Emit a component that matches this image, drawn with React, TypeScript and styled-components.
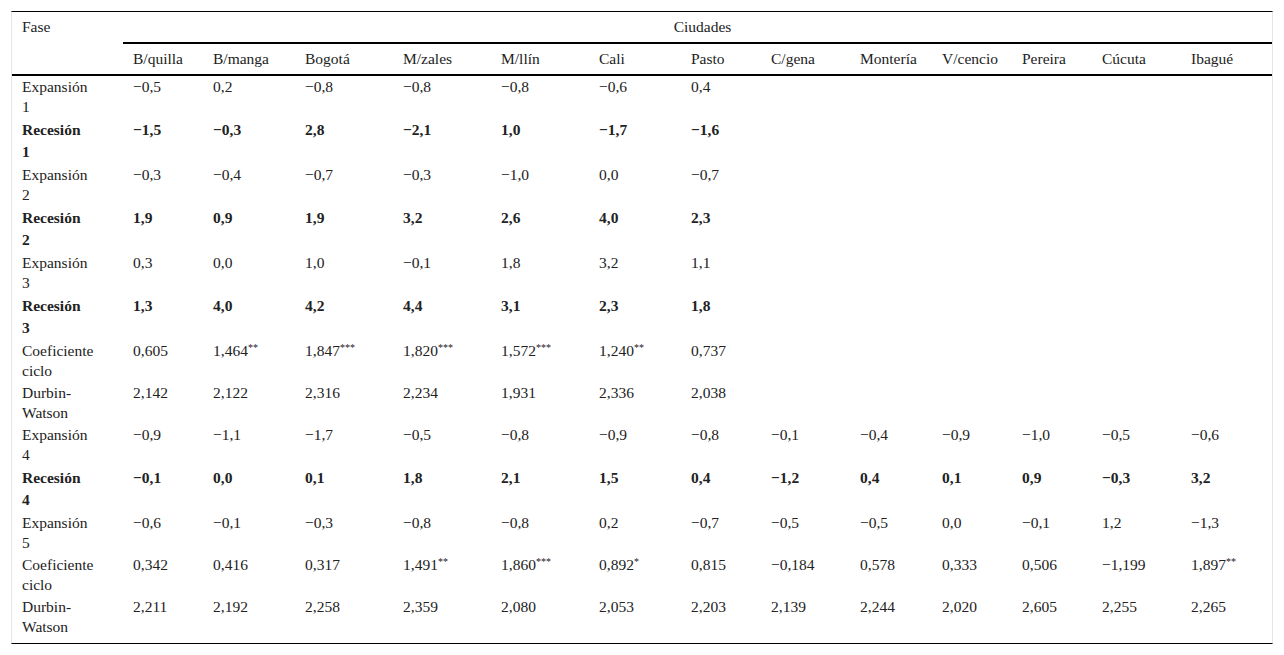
import React from "react";
import styled, { createGlobalStyle } from "styled-components";

const Global = createGlobalStyle`
  html, body { margin: 0; padding: 0; background: #fff; }
  body { font-family: "Liberation Serif", "Times New Roman", serif; color: #222; }
`;

const Frame = styled.div`
  margin: 11px 11px 0 11px;
  width: 1260px;
  border-top: 1px solid #000;
  border-bottom: 1px solid #000;
  border-left: 1px solid #e6e6e6;
  border-right: 1px solid #e6e6e6;
  padding-bottom: 5px;
`;

const Table = styled.table`
  width: 1260px;
  table-layout: fixed;
  border-collapse: separate;
  border-spacing: 0;
  font-family: "Liberation Serif", "Times New Roman", serif;
  font-size: 15.5px;
  color: #222;
`;

const HeadCell = styled.th<{ $center?: boolean; $rule?: boolean }>`
  font-family: "Liberation Serif", "Times New Roman", serif;
  font-weight: normal;
  text-align: ${(p) => (p.$center ? "center" : "left")};
  vertical-align: top;
  padding: 5px 0 5px 10px;
  line-height: 20px;
  border-bottom: ${(p) => (p.$rule ? "2px solid #000" : "0")};
  white-space: nowrap;
`;

const Cell = styled.td<{ $bold?: boolean }>`
  font-family: "Liberation Serif", "Times New Roman", serif;
  vertical-align: top;
  text-align: left;
  padding: 1px 0 1px 10px;
  line-height: ${(p) => (p.$bold ? "22px" : "20px")};
  font-weight: ${(p) => (p.$bold ? "bold" : "normal")};
  white-space: nowrap;
`;

const Star = styled.sup`
  font-size: 10px;
  line-height: 0;
  vertical-align: 5px;
`;

const widths = [111, 80, 92, 98, 98, 98, 92, 80, 89, 82, 80, 80, 89, 91];
const cities = [
  "B/quilla", "B/manga", "Bogotá", "M/zales", "M/llín", "Cali", "Pasto",
  "C/gena", "Montería", "V/cencio", "Pereira", "Cúcuta", "Ibagué",
];

type Row = { label: [string, string]; bold?: boolean; values: string[] };

const rows: Row[] = [
  { label: ["Expansión", "1"], values: ["−0,5", "0,2", "−0,8", "−0,8", "−0,8", "−0,6", "0,4"] },
  { label: ["Recesión", "1"], bold: true, values: ["−1,5", "−0,3", "2,8", "−2,1", "1,0", "−1,7", "−1,6"] },
  { label: ["Expansión", "2"], values: ["−0,3", "−0,4", "−0,7", "−0,3", "−1,0", "0,0", "−0,7"] },
  { label: ["Recesión", "2"], bold: true, values: ["1,9", "0,9", "1,9", "3,2", "2,6", "4,0", "2,3"] },
  { label: ["Expansión", "3"], values: ["0,3", "0,0", "1,0", "−0,1", "1,8", "3,2", "1,1"] },
  { label: ["Recesión", "3"], bold: true, values: ["1,3", "4,0", "4,2", "4,4", "3,1", "2,3", "1,8"] },
  { label: ["Coeficiente", "ciclo"], values: ["0,605", "1,464**", "1,847***", "1,820***", "1,572***", "1,240**", "0,737"] },
  { label: ["Durbin-", "Watson"], values: ["2,142", "2,122", "2,316", "2,234", "1,931", "2,336", "2,038"] },
  { label: ["Expansión", "4"], values: ["−0,9", "−1,1", "−1,7", "−0,5", "−0,8", "−0,9", "−0,8", "−0,1", "−0,4", "−0,9", "−1,0", "−0,5", "−0,6"] },
  { label: ["Recesión", "4"], bold: true, values: ["−0,1", "0,0", "0,1", "1,8", "2,1", "1,5", "0,4", "−1,2", "0,4", "0,1", "0,9", "−0,3", "3,2"] },
  { label: ["Expansión", "5"], values: ["−0,6", "−0,1", "−0,3", "−0,8", "−0,8", "0,2", "−0,7", "−0,5", "−0,5", "0,0", "−0,1", "1,2", "−1,3"] },
  { label: ["Coeficiente", "ciclo"], values: ["0,342", "0,416", "0,317", "1,491**", "1,860***", "0,892*", "0,815", "−0,184", "0,578", "0,333", "0,506", "−1,199", "1,897**"] },
  { label: ["Durbin-", "Watson"], values: ["2,211", "2,192", "2,258", "2,359", "2,080", "2,053", "2,203", "2,139", "2,244", "2,020", "2,605", "2,255", "2,265"] },
];

function Value({ text }: { text: string }) {
  const m = text.match(/^([^*]*)(\*+)$/);
  if (!m) return <>{text}</>;
  return (
    <>
      {m[1]}
      <Star>{m[2]}</Star>
    </>
  );
}

export default function App() {
  return (
    <>
      <Global />
      <Frame>
        <Table>
          <colgroup>
            {widths.map((w, i) => (
              <col key={i} style={{ width: w }} />
            ))}
          </colgroup>
          <thead>
            <tr>
              <HeadCell rowSpan={2} $rule>
                Fase
              </HeadCell>
              <HeadCell colSpan={13} $center $rule>
                Ciudades
              </HeadCell>
            </tr>
            <tr>
              {cities.map((c) => (
                <HeadCell key={c} $rule>
                  {c}
                </HeadCell>
              ))}
            </tr>
          </thead>
          <tbody>
            {rows.map((r, i) => (
              <tr key={i}>
                <Cell $bold={r.bold}>
                  {r.label[0]}
                  <br />
                  {r.label[1]}
                </Cell>
                {Array.from({ length: 13 }).map((_, j) => (
                  <Cell key={j} $bold={r.bold}>
                    {r.values[j] ? <Value text={r.values[j]} /> : null}
                  </Cell>
                ))}
              </tr>
            ))}
          </tbody>
        </Table>
      </Frame>
    </>
  );
}
